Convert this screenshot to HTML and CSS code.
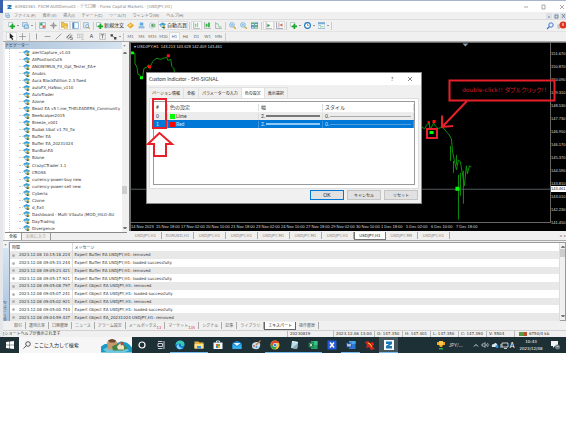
FILE: index.html
```html
<!DOCTYPE html>
<html lang="ja">
<head>
<meta charset="utf-8">
<title>Forex Capital Markets - [USDJPY,H1]</title>
<link rel="stylesheet" href="styles.css">
</head>
<body>
<svg class="defs" aria-hidden="true">
  <symbol id="ea" viewBox="0 0 14 12"><path d="M0 4 7 0l7 3-2 3H2z" fill="#3f9fce"/><path d="M3 4h8v4L8 11H6L3 8z" fill="#57b4dc"/><circle cx="6" cy="7" r="2" fill="#f3d79b"/><path d="m10 6 4 4-3 2-3-2z" fill="#d8a823"/><path d="M7 9h4v3H8z" fill="#2c6478"/></symbol>
  <symbol id="logo" viewBox="0 0 12 12"><path d="M1 1h10v4L6 8h5v3H1V8l5-3H1z" fill="#2079b8"/></symbol>
  <symbol id="plus" viewBox="0 0 12 12"><path d="M1 1h7v7H1z" fill="#fff" stroke="#8aa"/><path d="M6 3h3v3h3v3H9v3H6V9H3V6h3z" fill="#19a52a"/></symbol>
  <symbol id="folder" viewBox="0 0 12 12"><path d="M1 1h8v7H1z" fill="#dcecf8" stroke="#5b93bf"/><path d="M4 5h7v6H4z" fill="#b9d9ef" stroke="#4f8bbb"/></symbol>
  <symbol id="market" viewBox="0 0 12 12"><path d="M1 1h10v10H1z" fill="#e8f3fb" stroke="#5a9bc8"/><path d="M2 2h4v4H2z" fill="#3aa655"/><path d="M6 6h4v4H6z" fill="#e2603a"/></symbol>
  <symbol id="target" viewBox="0 0 12 12"><circle cx="6" cy="6" r="3" fill="none" stroke="#777"/><path d="M6 0v12M0 6h12" stroke="#777"/></symbol>
  <symbol id="star" viewBox="0 0 12 12"><path d="M0 1h5l1 2h5v6H0z" fill="#f3c64b" stroke="#be922a"/><path d="m8 5 1 2h3L10 9l1 3-3-2-2 2V9L4 7h3z" fill="#ffe37b" stroke="#b98b20" stroke-width=".6"/></symbol>
  <symbol id="pane" viewBox="0 0 12 12"><path d="M1 1h10v10H1z" fill="#fff" stroke="#4d8dc8"/><path d="M1 1h3v10H1z" fill="#4d8dc8"/></symbol>
  <symbol id="zoompage" viewBox="0 0 12 12"><path d="M1 1h8v9H1z" fill="#dfeefa" stroke="#6f9cc0"/><circle cx="7" cy="7" r="2.5" fill="#fff" stroke="#4c82b0"/><path d="m9 9 3 3" stroke="#d2a13d" stroke-width="2"/></symbol>
  <symbol id="book" viewBox="0 0 12 12"><path d="m0 6 6-5 6 5-6 5z" fill="#e7a325"/><path d="m2 6 4-3 3 2-4 3z" fill="#ffd878"/></symbol>
  <symbol id="person" viewBox="0 0 12 12"><path d="M3 1h6v5H3z" fill="#5aa7e2"/><path d="M1 7h10v4H1z" fill="#8fbce0"/></symbol>
  <symbol id="radio" viewBox="0 0 12 12"><circle cx="5" cy="6" r="4.5" fill="none" stroke="#8fb9d6"/><circle cx="6" cy="6" r="2.4" fill="#4fa36a"/><path d="M7 3h4v6H8z" fill="#91c08e"/></symbol>
  <symbol id="bars" viewBox="0 0 12 12"><path d="M1 0v11h11" stroke="#888" fill="none"/><path d="M4 3v6M8 1v7M4 4h2M6 7h2" stroke="#35a94b" fill="none"/></symbol>
  <symbol id="candles" viewBox="0 0 12 12"><path d="M1 0v11h11" stroke="#888" fill="none"/><path d="M3 3h3v5H3zM7 1h3v8H7z" fill="#27b53d"/></symbol>
  <symbol id="linec" viewBox="0 0 12 12"><path d="M1 0v11h11" stroke="#888" fill="none"/><path d="M2 3q3-2 4 3t5 2" stroke="#35a94b" fill="none"/></symbol>
  <symbol id="zoom" viewBox="0 0 12 12"><circle cx="5" cy="5" r="4" fill="#d3ecfc" stroke="#4b94cf"/><path d="M3 5h4" stroke="#2877b8"/><path d="m8 8 4 4" stroke="#d8a53c" stroke-width="2.4"/></symbol>
  <symbol id="tiles" viewBox="0 0 12 12"><path d="M0 1h6v5H0zM6 6h6v5H6z" fill="#47a843"/><path d="M6 1h6v5H6zM0 6h6v5H0z" fill="#397fc4"/><path d="M1 3h4v2H1zM7 3h4v2H7zM1 8h4v2H1zM7 8h4v2H7z" fill="#e4f1e4"/></symbol>
  <symbol id="scroll" viewBox="0 0 12 12"><path d="M2 0v11h10" stroke="#888" fill="none"/><path d="m4 3 5 3-5 3z" fill="#34a048"/></symbol>
  <symbol id="shift" viewBox="0 0 12 12"><path d="M1 0v11h11M5 1v8" stroke="#668" fill="none"/><path d="m11 2-5 3 5 3z" fill="#d96845"/></symbol>
  <symbol id="clock" viewBox="0 0 12 12"><circle cx="6" cy="6" r="5" fill="#fff" stroke="#2e7dc0" stroke-width="2.2"/><path d="M6 3v3h2" stroke="#456" fill="none"/></symbol>
  <symbol id="tmpl" viewBox="0 0 12 12"><path d="M0 1h12v10H0z" fill="#fff" stroke="#5b93bf"/><path d="M0 1h12v3H0z" fill="#76add9"/><path d="M2 6h3v4M7 8h3" stroke="#4b9a58" fill="none"/></symbol>
  <symbol id="cursor" viewBox="0 0 12 12"><path d="m3 0 7 7H7l2 4-2 1-2-4-2 2z" fill="#222"/></symbol>
  <symbol id="cross" viewBox="0 0 12 12"><path d="M6 0v12M0 6h12" stroke="#777"/></symbol>
  <symbol id="vline" viewBox="0 0 12 12"><path d="M6 1v10" stroke="#666"/></symbol>
  <symbol id="hline" viewBox="0 0 12 12"><path d="M1 6h10" stroke="#666"/></symbol>
  <symbol id="trend" viewBox="0 0 12 12"><path d="M1 11 11 1" stroke="#666"/></symbol>
  <symbol id="channel" viewBox="0 0 12 12"><path d="m0 8 8-7M3 11l8-7M2 9l3-6M6 9l3-6M7 8h4v3H7" stroke="#555" fill="none"/></symbol>
  <symbol id="fibo" viewBox="0 0 12 12"><path d="M0 2h12M0 5h12M0 8h12M8 11h4" stroke="#888" stroke-dasharray="2 1"/></symbol>
  <symbol id="label" viewBox="0 0 12 12"><path d="M1 1h10v10H1z" fill="none" stroke="#888" stroke-dasharray="2 1"/><path d="M3 3h6M6 3v6" stroke="#444"/></symbol>
  <symbol id="arrows" viewBox="0 0 12 12"><path d="M1 2h4v4H1zM7 7h4v4H7z" fill="#444"/><path d="m3 4 6 5" stroke="#444"/></symbol>
  <symbol id="bullet" viewBox="0 0 8 8"><circle cx="4" cy="4" r="3" fill="#b5b5b5" stroke="#888"/></symbol>
</svg>

<div class="desktop">
  <div class="edge"></div>
  <div class="app">
    <header class="titlebar">
      <svg class="ico"><use href="#logo"/></svg>
      <span class="title">63982361: FXCM-AUDDemo01 - デモ口座 - Forex Capital Markets - [USDJPY,H1]</span>
      <svg class="winbtns" viewBox="0 0 44 6"><path d="M2 3h4M20 1h3v4h-3zM38 1l4 4M42 1l-4 4" fill="none" stroke="#888" stroke-width=".7"/></svg>
    </header>
    <nav class="menubar">
      <svg class="ico"><use href="#folder"/></svg>
      <a href="#">ファイル (F)</a><a href="#">表示 (V)</a><a href="#">挿入(I)</a><a href="#">チャート(C)</a><a href="#">ツール(T)</a><a href="#">ウィンドウ(W)</a><a href="#">ヘルプ(H)</a>
      <svg class="mdibtns" viewBox="0 0 20 6"><path d="M0 0h6v6H0zM7 0h6v6H7zM14 0h6v6h-6z" fill="#dce1e8"/><path d="M2 4h2M9 2h3v3H9zM16 1l3 4M19 1l-3 4" fill="none" stroke="#61738c" stroke-width=".8"/></svg>
    </nav>
    <div class="toolbar">
      <button class="tb drop" aria-label="新規チャート"><svg class="ico"><use href="#plus"/></svg></button>
      <button class="tb drop" aria-label="プロファイル"><svg class="ico"><use href="#folder"/></svg></button>
      <i class="sep"></i>
      <button class="tb" aria-label="気配値"><svg class="ico"><use href="#market"/></svg></button>
      <button class="tb" aria-label="データ"><svg class="ico"><use href="#target"/></svg></button>
      <button class="tb on" aria-label="ナビゲーター"><svg class="ico"><use href="#star"/></svg></button>
      <button class="tb on" aria-label="ターミナル"><svg class="ico"><use href="#pane"/></svg></button>
      <button class="tb" aria-label="テスター"><svg class="ico"><use href="#zoompage"/></svg></button>
      <i class="sep"></i>
      <button class="tb wide"><svg class="ico"><use href="#plus"/></svg>新規注文</button>
      <button class="tb" aria-label="エディタ"><svg class="ico"><use href="#book"/></svg></button>
      <button class="tb" aria-label="口座"><svg class="ico"><use href="#person"/></svg></button>
      <button class="tb" aria-label="シグナル"><svg class="ico"><use href="#radio"/></svg></button>
      <button class="tb wide on"><svg class="ico"><use href="#ea"/></svg>自動売買</button>
      <i class="sep"></i>
      <button class="tb on" aria-label="バー"><svg class="ico"><use href="#bars"/></svg></button>
      <button class="tb" aria-label="ローソク足"><svg class="ico"><use href="#candles"/></svg></button>
      <button class="tb" aria-label="ライン"><svg class="ico"><use href="#linec"/></svg></button>
      <i class="sep"></i>
      <button class="tb" aria-label="拡大"><svg class="ico"><use href="#zoom"/></svg></button>
      <button class="tb" aria-label="縮小"><svg class="ico"><use href="#zoom"/></svg></button>
      <button class="tb" aria-label="整列"><svg class="ico"><use href="#tiles"/></svg></button>
      <i class="sep"></i>
      <button class="tb on" aria-label="自動スクロール"><svg class="ico"><use href="#scroll"/></svg></button>
      <button class="tb on" aria-label="シフト"><svg class="ico"><use href="#shift"/></svg></button>
      <i class="sep"></i>
      <button class="tb drop" aria-label="インディケータ"><svg class="ico"><use href="#plus"/></svg></button>
      <button class="tb drop" aria-label="時間足"><svg class="ico"><use href="#clock"/></svg></button>
      <button class="tb drop" aria-label="定型チャート"><svg class="ico"><use href="#tmpl"/></svg></button>
      <i class="sep"></i>
      <svg class="alerts" viewBox="0 0 20 10"><circle cx="5" cy="4" r="2.2" fill="#e8f1ff" stroke="#4a74c8"/><path d="M3.500 5.500 1 8" stroke="#4a74c8" stroke-width="1.300"/><path d="M11 5q0-2 3-2v5h-2q-1-1-1-3" fill="#ccc"/><circle cx="17" cy="4" r="3.500" fill="#e2321d"/><path d="M17 2v3" stroke="#fff"/></svg>
    </div>
    <div class="toolbar second">
      <button class="tb on" aria-label="カーソル"><svg class="ico"><use href="#cursor"/></svg></button>
      <button class="tb" aria-label="十字"><svg class="ico"><use href="#cross"/></svg></button>
      <i class="sep"></i>
      <button class="tb" aria-label="垂直線"><svg class="ico"><use href="#vline"/></svg></button>
      <button class="tb" aria-label="水平線"><svg class="ico"><use href="#hline"/></svg></button>
      <button class="tb" aria-label="トレンドライン"><svg class="ico"><use href="#trend"/></svg></button>
      <button class="tb" aria-label="チャネル"><svg class="ico"><use href="#channel"/></svg></button>
      <button class="tb" aria-label="フィボナッチ"><svg class="ico"><use href="#fibo"/></svg></button>
      <button class="tb">A</button>
      <button class="tb" aria-label="ラベル"><svg class="ico"><use href="#label"/></svg></button>
      <button class="tb drop" aria-label="矢印"><svg class="ico"><use href="#arrows"/></svg></button>
      <i class="sep"></i>
      <button class="tb tf">M1</button><button class="tb tf">M5</button><button class="tb tf">M15</button><button class="tb tf">M30</button><button class="tb tf on">H1</button><button class="tb tf">H4</button><button class="tb tf">D1</button><button class="tb tf">W1</button><button class="tb tf">MN</button>
      <i class="sep"></i>
    </div>

    <div class="work">
      <aside class="navigator">
        <div class="navhead"><span>ナビゲーター</span><button class="x" aria-label="閉じる">×</button></div>
        <div class="navbody">
          <ul class="tree">
            <li><svg><use href="#ea"/></svg>alertCapture_v1.03</li>
            <li><svg><use href="#ea"/></svg>AllPositionCutS</li>
            <li><svg><use href="#ea"/></svg>ANONYMUS_FX_Opt_Tester_EA+</li>
            <li><svg><use href="#ea"/></svg>Anubis</li>
            <li><svg><use href="#ea"/></svg>Aura BlackEdition 2.3 fixed</li>
            <li><svg><use href="#ea"/></svg>autoFX_HaNoo_v110</li>
            <li><svg><use href="#ea"/></svg>AutoTrader</li>
            <li><svg><use href="#ea"/></svg>Azone</li>
            <li><svg><use href="#ea"/></svg>Beast EA v5 t.me_THELEADERS_Community</li>
            <li><svg><use href="#ea"/></svg>BeeScalper2015</li>
            <li><svg><use href="#ea"/></svg>Breeze_v001</li>
            <li><svg><use href="#ea"/></svg>Budak Ubat v1.70_fix</li>
            <li><svg><use href="#ea"/></svg>Buffer EA</li>
            <li><svg><use href="#ea"/></svg>Buffer EA_20231024</li>
            <li><svg><use href="#ea"/></svg>BunBunEA</li>
            <li><svg><use href="#ea"/></svg>Bzone</li>
            <li><svg><use href="#ea"/></svg>CrazyCTrader 1.1</li>
            <li><svg><use href="#ea"/></svg>CROSS</li>
            <li><svg><use href="#ea"/></svg>currency-power-buy new</li>
            <li><svg><use href="#ea"/></svg>currency-power-sell new</li>
            <li><svg><use href="#ea"/></svg>Cyberia</li>
            <li><svg><use href="#ea"/></svg>Czone</li>
            <li><svg><use href="#ea"/></svg>d_Exit</li>
            <li><svg><use href="#ea"/></svg>Dashboard - Multi V3auto (MOD_HILO-AU</li>
            <li><svg><use href="#ea"/></svg>DayTrading</li>
            <li><svg><use href="#ea"/></svg>Divergence</li>
          </ul>
          <div class="scrollbar"><i class="up"></i><i class="thumb low"></i><i class="down"></i></div>
        </div>
        <div class="navtabs"><a href="#" class="cur">全般</a><a href="#">お気に入り</a></div>
      </aside>

      <section class="charts">
        <div class="chart">
          <div class="plotrow">
            <div class="plot">
              <p class="quote">▾ USDJPY,H1&nbsp; 143.213 143.628 142.409 143.461</p>
              <svg class="series" viewBox="0 0 421 179">
                <path d="M0 146.500h421" stroke="#555b60"/>
                <path d="m333 0 3 3 3-3z" fill="#8ca0ad"/>
                <g fill="none" stroke="#0b940b" stroke-linejoin="round">
                  <path d="M1 10h3v10l2 4 1 7 2 1 2 3 1-3 1-7 3-1 2-3M19 26l1-4 2-4 2-2 2-1 4 1 2-1 4-1 1 3 3-1 1 7 2 2 1 6 4-2 2 2 4-2 2 3 2-2 3 1v4"/>
                  <path d="m291 83 4 3 2-4 2-2 2 6 3-6 2 3 3 3 2-2 3 1 3 4 2 2 3 5 1 12 2 10 2 9 2-10 2 2 1 6 2 12 1 6 2-20 1 8 2-8 2 1"/>
                  <path d="M321 103v15M324 118v12M327 112v10M329 132v45M331 130v23M334 128v33M300 79v7"/>
                </g>
                <path d="M0 8h3v3H0zM9 33h3v3H9zM300 88h4v3h-4zM326 144h4v4h-4z" fill="#0f0"/>
                <path d="M17 22h3v3h-3zM36 11h3v3h-3zM298 78h2v2h-2zM303 77h3v3h-3z" fill="#f11"/>
              </svg>
            </div>
            <div class="prices">
              <span>151.670</span><span>150.870</span><span>150.090</span><span>149.310</span><span>148.530</span><span>147.730</span><span>146.950</span><span>146.170</span><span>145.370</span><span>144.590</span><span>143.810</span><span>143.010</span><span>142.230</span><span>141.450</span>
              <b class="bid">143.461</b>
            </div>
          </div>
          <div class="times"><span>14 Nov 2023</span><span>15 Nov 18:00</span><span>17 Nov 02:00</span><span>20 Nov 10:00</span><span>21 Nov 18:00</span><span>23 Nov 02:00</span><span>24 Nov 10:00</span><span>27 Nov 18:00</span><span>29 Nov 02:00</span><span>30 Nov 10:00</span><span>1 Dec 18:00</span><span>5 Dec 02:00</span><span>6 Dec 10:00</span><span>7 Dec 18:00</span></div>
        </div>
        <nav class="charttabs"><a href="#">USDJPY,H1</a><a href="#">EURUSD,H1</a><a href="#">USDJPY,H1</a><a href="#">USDJPY,H1</a><a href="#">USDJPY,M1</a><a href="#">USDJPY,M1</a><a href="#">USDJPY,H1</a><a href="#" class="cur">USDJPY,H1</a><a href="#">USDJPY,M5</a><a href="#">USDJPY,H1</a><span class="pager">◂&nbsp; ▸</span></nav>
      </section>
    </div>

    <section class="terminal">
      <div class="side"><button class="x" aria-label="閉じる">×</button><span>ターミナル</span></div>
      <div class="log">
        <table class="journal">
          <thead><tr><th class="when">時間</th><th>メッセージ</th></tr></thead>
          <tbody>
            <tr><td><svg><use href="#bullet"/></svg>2023.12.08 10:15:18.224</td><td>Expert Buffer EA USDJPY,H1: removed</td></tr>
            <tr><td><svg><use href="#bullet"/></svg>2023.12.08 09:05:33.244</td><td>Expert Buffer EA USDJPY,H1: loaded successfully</td></tr>
            <tr><td><svg><use href="#bullet"/></svg>2023.12.08 09:05:23.421</td><td>Expert Buffer EA USDJPY,H1: removed</td></tr>
            <tr><td><svg><use href="#bullet"/></svg>2023.12.08 09:05:17.921</td><td>Expert Buffer EA USDJPY,H1: loaded successfully</td></tr>
            <tr><td><svg><use href="#bullet"/></svg>2023.12.08 09:05:08.797</td><td>Expert Object EA USDJPY,H1: removed</td></tr>
            <tr><td><svg><use href="#bullet"/></svg>2023.12.08 09:05:07.241</td><td>Expert Object EA USDJPY,H1: loaded successfully</td></tr>
            <tr><td><svg><use href="#bullet"/></svg>2023.12.08 09:05:02.921</td><td>Expert Object EA USDJPY,H1: removed</td></tr>
            <tr><td><svg><use href="#bullet"/></svg>2023.12.08 09:05:00.744</td><td>Expert Object EA USDJPY,H1: loaded successfully</td></tr>
            <tr><td><svg><use href="#bullet"/></svg>2023.12.08 09:04:59.437</td><td>Expert Object EA_20231024 USDJPY,H1: removed</td></tr>
          </tbody>
        </table>
        <div class="scrollbar"><i class="up"></i><i class="thumb high"></i><i class="down"></i></div>
      </div>
    </section>
    <nav class="termtabs"><a href="#">取引</a><a href="#">運用比率</a><a href="#">口座履歴</a><a href="#">ニュース</a><a href="#">アラーム設定</a><a href="#">メールボックス<sub>13</sub></a><a href="#">マーケット<sub>135</sub></a><a href="#">シグナル</a><a href="#">記事</a><a href="#">ライブラリ</a><a href="#" class="cur">エキスパート</a><a href="#">操作履歴</a></nav>
    <footer class="status"><span class="help">[ショートヘルプが表示されます</span><span class="w2">20230819</span><span class="w3">2023.12.06 13:00</span><span>O: 147.350</span><span>H: 147.401</span><span>L: 147.350</span><span>C: 147.390</span><span>V: 5504</span><span class="net"><i></i>6750/4 kb</span></footer>
  </div>

  <div class="dialog" role="dialog" aria-label="Custom Indicator">
    <div class="dtitle"><span>Custom Indicator - SHI-SIGNAL</span><button class="q" aria-label="ヘルプ">?</button><button class="q" aria-label="閉じる"><svg viewBox="0 0 6 6"><path d="m1 1 4 4M5 1 1 5" stroke="#555" stroke-width=".7"/></svg></button></div>
    <div class="dtabs"><button>バージョン情報</button><button>全般</button><button>パラメーターの入力</button><button class="cur">色の設定</button><button>表示選択</button></div>
    <div class="dpage">
      <table class="colors">
        <thead><tr><th>#</th><th>色の設定</th><th>幅</th><th>スタイル</th></tr></thead>
        <tbody>
          <tr><td>0</td><td><i class="sw lime"></i>Lime</td><td><div class="ln thick">2.</div></td><td><div class="ln">0.</div></td></tr>
          <tr class="sel"><td>1</td><td><i class="sw red"></i>Red</td><td><div class="ln thick">2.</div></td><td><div class="ln">0.</div></td></tr>
        </tbody>
      </table>
    </div>
    <div class="dfoot"><button class="ok">OK</button><button>キャンセル</button><button>リセット</button></div>
  </div>

  <svg class="marks" viewBox="0 0 566 240">
    <g fill="none" stroke="#e9202a" stroke-width="2">
      <path d="M153 99h13v29h-13z"/>
      <path d="m159.500 133-11.500 11h6v12h12v-12h6z" fill="#fff"/>
      <path d="M449.500 80.500h105v20h-105z"/>
      <path d="m467 101-25 26m0-11.500V127l11-1"/>
      <path d="M427 129h10v9h-10z"/>
    </g>
  </svg>
  <p class="note">double-click!! ダブルクリック!!</p>
</div>

<div class="taskbar">
  <button class="start" aria-label="スタート"><svg viewBox="0 0 8 8"><path d="M0 1l3.500-.5v3.200H0zM4 .4 8 0v3.700H4zM0 4.200h3.500v3.200L0 7zM4 4.200h4V8l-4-.5z" fill="#fff"/></svg></button>
  <label class="search"><svg viewBox="0 0 8 8"><circle cx="5" cy="3" r="2.300" fill="none" stroke="#333" stroke-width=".8"/><path d="M3.300 4.700.5 7.500" stroke="#333" stroke-width=".8"/></svg><input type="text" placeholder="ここに入力して検索" aria-label="検索"></label>
  <svg class="isle" viewBox="0 0 31 15"><path d="M0 15V9Q5 4 12 7l8-3q7 0 11 6v5z" fill="#1a9ac4"/><path d="M2 12q7-5 14-2l8-2 4 5-5 2H6z" fill="#6cc6dd"/><path d="M6 5q1-3 5-3 5 0 5 4v6H7z" fill="#c89a6c"/><path d="M7 3q4-3 8 0l-1 2H9z" fill="#6b4a39"/><path d="M11 9q7-5 13-1l3 3-6 2H12z" fill="#458442"/><path d="m16 9 4-4 3 4v3h-6z" fill="#efe2c7"/><path d="M19 5q3-2 4 2l-3 1z" fill="#b14f3c"/></svg>
  <button aria-label="Cortana"><svg viewBox="0 0 10 10"><circle cx="5" cy="5" r="3" fill="none" stroke="#fff" stroke-width="1.200"/></svg></button>
  <button aria-label="タスクビュー"><svg viewBox="0 0 10 10"><path d="M2 3.500h4.500v3H2zM2 1.500h4.500M2 8.500h4.500M8 1v8" fill="none" stroke="#dde" stroke-width=".9"/></svg></button>
  <button class="run" aria-label="Edge"><svg viewBox="0 0 10 10"><circle cx="5" cy="5" r="4.600" fill="#1377c8"/><path d="M.5 5Q1 .4 5.500.4q4 .4 4 4Q9 6.800 6 6q1-2-1.500-2.500Q2 3.500.5 5" fill="#38c9b5"/><path d="M4 4q-1 4 4 4-4 2.500-6-.5Q1 5 4 4" fill="#7fd6f7"/></svg></button>
  <button class="run" aria-label="エクスプローラー"><svg viewBox="0 0 10 10"><path d="M.5 1.500h4l1 1h4v6h-9z" fill="#e9b43a"/><path d="M.5 4h9v4.500h-9z" fill="#fbe08a"/><path d="M3 6h4v2.500H3z" fill="#3a8fd6"/></svg></button>
  <button aria-label="Store"><svg viewBox="0 0 10 10"><path d="M3.500 2.500V1h3v1.500" fill="none" stroke="#bfe5fa"/><path d="M.5 2.500h9V9h-9z" fill="#f2f6fa"/><path d="M3 4h2v2H3z" fill="#e85a35"/><path d="M5 4h2v2H5z" fill="#60b044"/><path d="M3 6h2v2H3z" fill="#2b8bdc"/><path d="M5 6h2v2H5z" fill="#f4b51f"/></svg></button>
  <button aria-label="メール"><svg viewBox="0 0 10 10"><path d="M.5 3 5 .8 9.500 3v6h-9z" fill="#1787d6"/><path d="M1.500 3h7L5 6z" fill="#e9f6ff"/><path d="M.5 9V4L5 7l4.500-3v5z" fill="#35b0ef"/></svg></button>
  <button aria-label="ペイント"><svg viewBox="0 0 10 10"><path d="M1 6q0-4 5-4 4 0 3 4T4 9Q1 9 1 6" fill="#c4dfe9"/><path d="M9.500.5 5 5" stroke="#c37b42" stroke-width="1.300"/><circle cx="3" cy="6" r="1" fill="#db604a"/><circle cx="5.500" cy="7" r="1" fill="#4a94c8"/></svg></button>
  <button class="run" aria-label="Chrome"><svg viewBox="0 0 10 10"><circle cx="5" cy="5" r="4.500" fill="#f6c52b"/><path d="M1 3q2-3 5-2.500 2.500.5 3.300 2.500H5L3 6z" fill="#e2432f"/><path d="M1 3q-1 3 1 5 1.500 1.500 3 1.500L7 6 3 6z" fill="#33a552"/><circle cx="5" cy="5" r="2" fill="#fff"/><circle cx="5" cy="5" r="1.500" fill="#3e7de0"/></svg></button>
  <button class="run" aria-label="メモ帳"><svg viewBox="0 0 10 10"><path d="m3 1 6 1-1 7-6-1z" fill="#b8e0ec"/><path d="m3 8 5-4 1 1-1 4z" fill="#8faab5"/><path d="m3 1 6 1v1L3 2z" fill="#e6f4f8"/></svg></button>
  <button class="run" aria-label="Excel"><svg viewBox="0 0 10 10"><path d="M3 1h6.500v8H3z" fill="#23a266"/><path d="M6 1h3.500v4H6z" fill="#35c481"/><path d="M.5 2.500h5v5h-5z" fill="#12703f"/><path d="m2 3.500 2 3M4 3.500l-2 3" stroke="#fff" stroke-width=".8"/></svg></button>
  <button aria-label="X"><svg viewBox="0 0 10 10"><path d="M.5.5h9v9h-9z" fill="#235ae0"/><path d="m3 2.500 4 5M7 2.500l-4 5" stroke="#fff" stroke-width="1.500"/></svg></button>
  <button class="run" aria-label="Word"><svg viewBox="0 0 10 10"><path d="M3 1h6.500v8H3z" fill="#2c78d4"/><path d="M3 1h6.500v3H3z" fill="#48a6ee"/><path d="M.5 2.500h5v5h-5z" fill="#17509f"/><path d="m1.200 3.500.8 3 1-2.500 1 2.500.8-3" fill="none" stroke="#fff" stroke-width=".7"/></svg></button>
  <button aria-label="FX"><svg viewBox="0 0 10 10"><path d="m0 2 3-1 2 2 3-1 1 3-2 1 3 3-4 1-2-3-3 1 1-3z" fill="#d9261c"/><path d="m3 3 2 1 2 3" fill="none" stroke="#f3cf29"/></svg></button>
  <button class="run act" aria-label="MT4"><svg viewBox="0 0 10 10"><path d="M0 0h10v10H0z" fill="#f6fafc"/><path d="M2 1.500h6V4L5 6h3v2.500H2V6l3-2H2z" fill="#1a78b6"/></svg></button>
  <div class="tray">
    <svg class="cup" viewBox="0 0 10 10"><path d="M1 2h8v3H7L6 7H4L3 5H1z" fill="#f3a51c"/><path d="M3 1h4v4H3z" fill="#ffc844"/><path d="M3 8h4v1.500H3z" fill="#2fa84c"/></svg>
    <span class="jpy">JPY/...</span>
    <svg class="sys" viewBox="0 0 38 10"><path d="m3 6.500 2-2 2 2" fill="none" stroke="#fff" stroke-width=".8"/><path d="M11 4h1.500L14 2.500v5L12.500 6H11zM15 4q1 1 0 2.200M16.500 3q1.500 2 0 4" fill="none" stroke="#ddd" stroke-width=".7"/><path d="M21 7q-1-3 2-3 1-2 3 0 1 2 0 3z" fill="#d6e6ee"/><circle cx="26" cy="6.500" r="1.500" fill="#2f93d8"/><path d="M31 3h6v4h-6zM33 8.500h3M30 4v4" fill="none" stroke="#eee" stroke-width=".8"/></svg>
    <span class="ime">A</span>
    <div class="clock"><span>10:43</span><span>2023/12/08</span></div>
    <svg class="notif" viewBox="0 0 10 10"><path d="M1 1h7v5H5L3 8V6H1z" fill="#f3f3f3"/><circle cx="7.500" cy="7" r="2.500" fill="#6d7b82"/><path d="M6.500 6.500h2" stroke="#fff" stroke-width=".6"/></svg>
  </div>
</div>
</body>
</html>
```
FILE: styles.css
```css
* { box-sizing: border-box; }

body {
  margin: 0;
  background: #fff;
  color: #333;
  font: 5px/7px Lato, "Noto Sans CJK JP", sans-serif;
  overflow: hidden;
}

button {
  margin: 0;
  padding: 0;
  border: 0;
  background: none;
  color: inherit;
  font: inherit;
}

a { color: inherit; text-decoration: none; }
p, ul { margin: 0; padding: 0; list-style: none; }
table { border-collapse: collapse; }
th, td { padding: 0; font-weight: 400; text-align: left; }
svg { display: block; flex: none; }
.defs { position: absolute; width: 0; height: 0; }

/* Small latin captions share one wide face */
.title, .tree, .journal td, .charttabs, .status, .clock {
  font-family: "DejaVu Sans", "Noto Sans CJK JP", sans-serif;
  font-size: 4px;
}

.desktop { position: relative; display: flex; }
.edge {
  flex: none;
  width: 3px;
  background: linear-gradient(#3761ad 13px, #e4e6ea 13px);
}
.app {
  flex: 1;
  min-width: 0;
  background: #f0f0f0;
  border-top: 1px solid #a7b4cc;
}
.ico { width: 7px; height: 7px; }

/* Title, menu and toolbars */
.titlebar {
  display: flex;
  align-items: center;
  height: 11px;
  padding-left: 4px;
  background: #fff;
  color: #888;
}
.titlebar .ico { width: 5px; height: 6px; }
.title { flex: 1; margin-left: 3px; white-space: nowrap; }
.winbtns { width: 44px; height: 6px; }
.menubar {
  display: flex;
  align-items: center;
  gap: 7px;
  height: 8px;
  padding-left: 2px;
  border-bottom: 1px solid #dcdcdc;
  color: #777;
  font-size: 4px;
  white-space: nowrap;
}
.menubar .ico { width: 5px; height: 5px; margin-right: -3px; }
.mdibtns { width: 20px; height: 6px; margin-left: auto; }
.toolbar {
  display: flex;
  align-items: center;
  height: 11px;
  padding-left: 3px;
  white-space: nowrap;
}
.second { height: 10px; border-top: 1px solid #e2e2e2; }
.tb {
  display: flex;
  align-items: center;
  justify-content: center;
  width: 11px;
  height: 9px;
}
.tb.on { background: #fafafa; border: 1px solid #dedede; }
.tb.wide { width: 30px; gap: 1px; color: #222; }
.tb.drop { width: 14px; }
.tb.drop::after {
  content: "";
  margin-left: 2px;
  border: 1px solid transparent;
  border-top-color: #444;
}
.tb.tf { color: #666; font-size: 4px; }
.sep { width: 1px; height: 8px; margin: 0 1px; background: #ccc; }
.alerts { width: 20px; height: 10px; margin-left: auto; }

/* Navigator */
.work { display: flex; height: 199px; border-top: 1px solid #aaa; }
.navigator { flex: none; display: flex; flex-direction: column; width: 126px; padding: 0 2px; }
.navhead {
  display: flex;
  justify-content: space-between;
  height: 7px;
  background: linear-gradient(90deg, #a9c2da, #d8e4f0);
  color: #334;
  font-size: 4px;
}
.x { width: 5px; line-height: 6px; background: #f4f4f4; color: #222; }
.navbody { flex: 1; display: flex; min-height: 0; background: #fff; }
.tree {
  flex: 1;
  display: flex;
  flex-direction: column;
  min-width: 0;
  margin-left: 4px;
  border-left: 1px dotted #ccc;
}
.tree li { flex: 1; display: flex; align-items: center; min-height: 0; white-space: nowrap; }
.tree li::before { content: ""; flex: none; width: 4px; margin-left: 9px; border-top: 1px dotted #ccc; }
.tree svg { width: 7px; height: 6px; margin-right: 2px; }
.scrollbar {
  flex: none;
  display: flex;
  flex-direction: column;
  align-items: center;
  width: 5px;
  background: #f0f0f0;
}
.up, .down { width: 4px; height: 5px; border: 1px solid transparent; }
.up { border-bottom: 2px solid #777; }
.down { border-top: 2px solid #777; margin-top: auto; }
.thumb { width: 5px; height: 8px; background: #cdcdcd; }
.low { margin-top: 132px; }
.high { margin-top: 1px; }
.navtabs { display: flex; height: 8px; border-top: 1px solid #888; color: #999; font-size: 4px; }
.navtabs a { padding: 0 4px; border-right: 1px solid #999; }
.cur { background: #fff; color: #222; }

/* Charts */
.charts { flex: 1; display: flex; flex-direction: column; min-width: 0; }
.chart {
  flex: 1;
  display: flex;
  flex-direction: column;
  border: solid #6b6b6b;
  border-width: 1px 0 0 2px;
  background: #000;
  color: #ddd;
  font-family: "Liberation Sans", sans-serif;
  font-size: 4px;
}
.plotrow { display: flex; height: 180px; }
.plot { position: relative; flex: 1; min-width: 0; border: solid #666; border-width: 0 1px 1px 0; }
.quote { position: absolute; top: 0; left: 3px; white-space: nowrap; }
.series { width: 100%; height: 179px; }
.prices {
  position: relative;
  flex: none;
  width: 15px;
  padding-top: 4px;
}
.prices span { display: block; line-height: 13px; }
.bid {
  position: absolute;
  top: 143px;
  left: 0;
  width: 15px;
  background: #fff;
  color: #222;
  font-weight: 400;
  line-height: 6px;
}
.times { display: flex; white-space: nowrap; }
.times span { flex: none; width: 25px; }
.charttabs {
  display: flex;
  align-items: center;
  height: 9px;
  padding-left: 1px;
  color: #888;
}
.charttabs a {
  width: 32px;
  border-right: 1px solid #aaa;
  text-align: center;
}
.charttabs .cur { border: 1px solid #777; border-top: 0; color: #222; }
.pager { margin-left: auto; }

/* Terminal */
.terminal { display: flex; height: 81px; padding-top: 1px; border-top: 1px solid #aaa; }
.side {
  display: flex;
  flex-direction: column;
  justify-content: space-between;
  width: 6px;
  background: linear-gradient(#dbe7f3, #a9c3de);
  color: #345;
  font-size: 4px;
}
.side span { writing-mode: vertical-rl; transform: rotate(180deg); line-height: 6px; }
.log { flex: 1; display: flex; border: 1px solid #999; background: #fff; }
.journal { flex: 1; width: 100%; height: 78px; table-layout: fixed; }
.journal th, .journal td { padding-left: 2px; white-space: nowrap; border-right: 1px solid #ddd; }
.journal th { height: 8px; font-size: 4px; }
.journal .when { width: 62px; }
.journal tbody tr:nth-child(odd) { background: #e8e8e8; }
.journal td { line-height: 7px; }
.journal svg { display: inline-block; width: 3px; height: 3px; margin-right: 4px; vertical-align: middle; }
.termtabs {
  display: flex;
  align-items: center;
  height: 9px;
  padding-left: 8px;
  color: #666;
  font-size: 4px;
  white-space: nowrap;
}
.termtabs a { padding: 0 3px; border-right: 1px solid #aaa; }
.termtabs .cur { border: 1px solid #666; border-top: 0; color: #111; }
sub { color: #e33; font-size: 4px; line-height: 0; }
.status {
  display: flex;
  align-items: flex-start;
  height: 7px;
  border-top: 1px solid #d0d0d0;
  line-height: 6px;
  white-space: nowrap;
}
.status span { width: 28px; padding-left: 2px; border-left: 1px solid #bbb; }
.status .help { flex: 1; padding-left: 0; border: 0; }
.status .w2 { width: 46px; }
.status .w3 { width: 41px; }
.status .net { display: flex; width: 52px; }
.net i { width: 8px; height: 4px; margin: 1px 2px; background: linear-gradient(90deg, #5a9b3e 60%, #b8522e 60%); }

/* Indicator dialog */
.dialog {
  position: absolute;
  top: 72px;
  left: 146px;
  width: 276px;
  height: 132px;
  display: flex;
  flex-direction: column;
  border: 1px solid #888;
  background: #f0f0f0;
}
.dtitle { display: flex; align-items: center; height: 12px; padding: 0 2px; background: #fff; }
.dtitle span { flex: 1; }
.q { width: 18px; }
.q svg { width: 6px; height: 6px; margin: auto; }
.dtabs { display: flex; height: 13px; padding: 2px 2px 0; color: #222; font-size: 4px; }
.dtabs button { padding: 0 3px; white-space: nowrap; border: 1px solid #e0e0e0; border-width: 1px 1px 0 0; }
.dtabs .cur { background: #fff; }
.dpage { flex: 1; display: flex; margin: 0 2px; padding: 2px 3px 3px; background: #fff; border: 1px solid #ddd; }
.colors {
  display: block;
  flex: 1;
  border: 1px solid #999;
}
.colors thead, .colors tbody { display: block; }
.colors tr { display: grid; grid-template-columns: 14px 91px 64px 1fr; align-items: center; height: 8px; }
.colors thead tr { height: 10px; }
.colors td, .colors th { padding-left: 2px; border-right: 1px solid #ddd; }
.colors tbody tr { background: #ececec; }
.colors tbody .sel { background: #0078d7; color: #d7ebfb; }
.colors .sel td { border-color: #3a94df; }
.sw { display: inline-block; width: 5px; height: 5px; margin-right: 1px; vertical-align: middle; }
.lime { background: #0f0; }
.red { background: #f00; }
.ln { display: flex; align-items: center; gap: 1px; padding-right: 2px; }
.ln::after { content: ""; flex: 1; height: 1px; background: #aaa; }
.thick::after { height: 2px; background: #777; }
.sel .ln::after { background: #4d9fdf; }
.sel .thick::after { background: #8fc8f4; }
.dfoot { display: flex; justify-content: flex-end; gap: 3px; height: 14px; padding: 1px 3px 3px; }
.dfoot button { width: 34px; border: 1px solid #c4c4c4; background: #e1e1e1; color: #222; font-size: 4px; }
.dfoot .ok { border: 1px solid #0078d7; font-size: 5px; }

/* Annotations over the chart */
.marks { position: absolute; top: 0; left: 0; width: 566px; height: 240px; pointer-events: none; }
.note {
  position: absolute;
  top: 85px;
  left: 462px;
  color: #d01d24;
  font: 6px/9px "DejaVu Sans", "Noto Sans CJK JP", sans-serif;
  font-feature-settings: "palt";
  white-space: nowrap;
}

/* Taskbar */
.taskbar { display: flex; align-items: stretch; height: 16px; background: #1d3036; color: #fff; }
.taskbar > button {
  flex: none;
  display: flex;
  align-items: center;
  justify-content: center;
  width: 19px;
  border-bottom: 1px solid transparent;
}
.taskbar > button svg { width: 10px; height: 10px; }
.taskbar .start svg { width: 8px; height: 8px; }
.taskbar .run { border-bottom-color: #76b9ed; }
.taskbar .act { background: #43565e; }
.search { flex: none; display: flex; align-items: center; gap: 3px; width: 82px; padding-left: 4px; background: #f6f6f6; }
.search svg { width: 8px; height: 8px; }
.search input { flex: 1; min-width: 0; padding: 0; border: 0; background: none; font: 5px/8px "Noto Sans CJK JP", sans-serif; }
.search input::placeholder { color: #222; opacity: 1; }
.isle { width: 31px; height: 16px; background: #f6f6f6; }
.tray { display: flex; align-items: center; margin-left: auto; }
.cup { width: 10px; height: 10px; }
.jpy { width: 22px; margin-left: 3px; color: #ccd; }
.sys { width: 38px; height: 10px; }
.ime { width: 6px; font-size: 7px; text-align: center; }
.clock { display: flex; flex-direction: column; width: 32px; text-align: center; }
.notif { width: 10px; height: 10px; margin: 0 6px 0 3px; }
```
